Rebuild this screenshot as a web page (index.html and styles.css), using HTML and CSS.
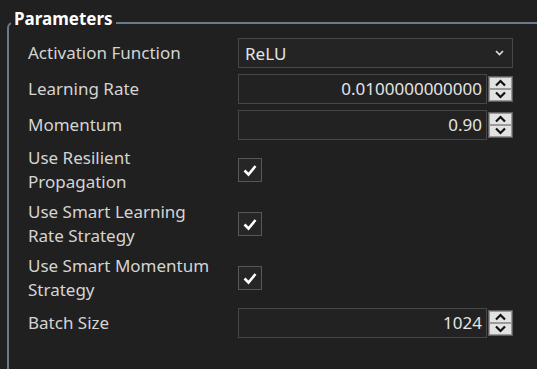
FILE: index.html
```html
<!DOCTYPE html>
<html lang="en">
<head>
    <meta charset="UTF-8">
    <title>Parameters</title>
    <link rel="stylesheet" href="styles.css">
</head>
<body>
    <fieldset class="group">
        <legend>Parameters</legend>
        <div class="form">
            <!-- Activation -->
            <div class="label">Activation Function</div>
            <div class="combo">
                <span>ReLU</span>
                <svg class="chev" width="9" height="6" viewBox="0 0 9 6"><path d="M1 1 L4.5 4.5 L8 1" fill="none" stroke="#e0e0e0" stroke-width="1.6"/></svg>
            </div>

            <div class="label">Learning Rate</div>
            <div class="numeric">
                <div class="numbox">0.0100000000000</div>
                <div class="spinner">
                    <div class="spin"><svg width="13" height="8" viewBox="0 0 13 8"><path d="M2 6.5 L6.5 2 L11 6.5" fill="none" stroke="#111" stroke-width="2.2"/></svg></div>
                    <div class="spin"><svg width="13" height="8" viewBox="0 0 13 8"><path d="M2 1.5 L6.5 6 L11 1.5" fill="none" stroke="#111" stroke-width="2.2"/></svg></div>
                </div>
            </div>

            <div class="label">Momentum</div>
            <div class="numeric">
                <div class="numbox">0.90</div>
                <div class="spinner">
                    <div class="spin"><svg width="13" height="8" viewBox="0 0 13 8"><path d="M2 6.5 L6.5 2 L11 6.5" fill="none" stroke="#111" stroke-width="2.2"/></svg></div>
                    <div class="spin"><svg width="13" height="8" viewBox="0 0 13 8"><path d="M2 1.5 L6.5 6 L11 1.5" fill="none" stroke="#111" stroke-width="2.2"/></svg></div>
                </div>
            </div>

            <div class="label">Use Resilient<br>Propagation</div>
            <div class="check-cell">
                <div class="check"><svg width="22" height="22" viewBox="0 0 22 22"><path d="M5.5 11.5 L9.5 15.5 L16.5 7" fill="none" stroke="#fff" stroke-width="2.6"/></svg></div>
            </div>

            <div class="label">Use Smart Learning<br>Rate Strategy</div>
            <div class="check-cell">
                <div class="check"><svg width="22" height="22" viewBox="0 0 22 22"><path d="M5.5 11.5 L9.5 15.5 L16.5 7" fill="none" stroke="#fff" stroke-width="2.6"/></svg></div>
            </div>

            <div class="label">Use Smart Momentum<br>Strategy</div>
            <div class="check-cell">
                <div class="check"><svg width="22" height="22" viewBox="0 0 22 22"><path d="M5.5 11.5 L9.5 15.5 L16.5 7" fill="none" stroke="#fff" stroke-width="2.6"/></svg></div>
            </div>

            <div class="label">Batch Size</div>
            <div class="numeric">
                <div class="numbox">1024</div>
                <div class="spinner">
                    <div class="spin"><svg width="13" height="8" viewBox="0 0 13 8"><path d="M2 6.5 L6.5 2 L11 6.5" fill="none" stroke="#111" stroke-width="2.2"/></svg></div>
                    <div class="spin"><svg width="13" height="8" viewBox="0 0 13 8"><path d="M2 1.5 L6.5 6 L11 1.5" fill="none" stroke="#111" stroke-width="2.2"/></svg></div>
                </div>
            </div>
        </div>
    </fieldset>
</body>
</html>
```

FILE: styles.css
```css
html, body {
    margin: 0;
    height: 100%;
    overflow: hidden;
}
body {
    background-color: #202020;
    color: #d4d4d4;
    font-family: "Noto Sans", "Open Sans", sans-serif;
    font-size: 17px;
}
.group {
    box-sizing: border-box;
    margin: 8px 0 0 7px;
    padding: 0;
    height: calc(100% - 8px);
    border: 2px solid #6a7b8b;
    border-right: none;
    border-bottom: none;
    border-top-left-radius: 6px;
}
.group legend {
    margin-left: 2px;
    padding: 0 3px 8px 3px;
    color: #ffffff;
    font-weight: bold;
    font-size: 17px;
    line-height: 22px;
}
.form {
    display: grid;
    grid-template-columns: 210px 275px;
    grid-template-rows: 30px 30px 30px 48px 48px 48px 30px;
    row-gap: 6px;
    padding-left: 19px;
}
.label {
    display: flex;
    align-items: center;
    line-height: 24px;
}
.combo {
    display: flex;
    align-items: center;
    justify-content: space-between;
    border: 1px solid #474747;
    background-color: #242424;
    padding: 0 8px 0 6px;
    color: #e4e4e4;
}
.chev {
    display: block;
}
.numeric {
    display: flex;
    align-items: center;
    gap: 1px;
}
.numbox {
    flex: 1;
    height: 28px;
    border: 1px solid #474747;
    background-color: #222222;
    text-align: right;
    padding-right: 4px;
    line-height: 28px;
    color: #e4e4e4;
}
.spinner {
    display: flex;
    flex-direction: column;
    width: 25px;
    height: 26px;
    border: 1px solid #5c5c5c;
    box-sizing: border-box;
}
.spin {
    flex: 1;
    display: flex;
    align-items: center;
    justify-content: center;
    background-color: #e2e2e2;
    border: 1px solid #9a9a9a;
}
.check-cell {
    display: flex;
    align-items: center;
}
.check {
    width: 22px;
    height: 22px;
    border: 1px solid #575757;
    background-color: #262626;
}
.check svg {
    display: block;
}
```
